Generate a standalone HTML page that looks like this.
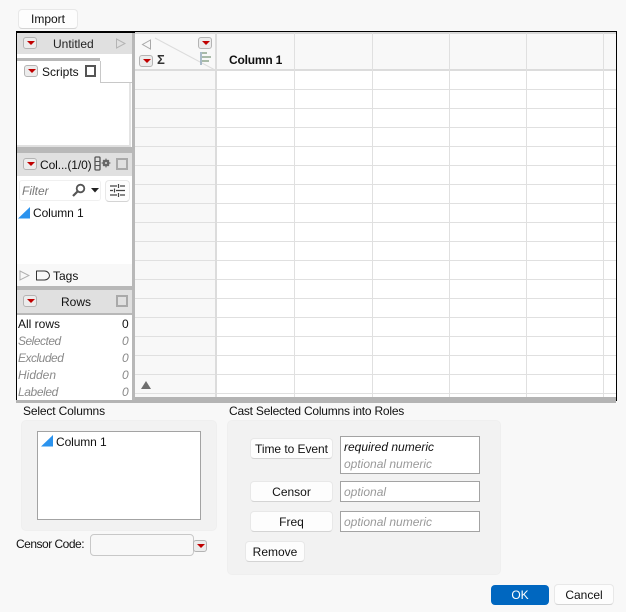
<!DOCTYPE html>
<html><head><meta charset="utf-8">
<style>
html,body{margin:0;padding:0;width:626px;height:612px;overflow:hidden;background:#f8f8f8;font-family:"Liberation Sans",sans-serif;font-size:12px;color:#111}
.a{position:absolute;box-sizing:border-box}
.t{position:absolute;white-space:nowrap;line-height:14px}
.btn{position:absolute;box-sizing:border-box;background:#fdfdfd;border:1px solid #e8e8e8;border-bottom-color:#d4d4d4;border-radius:4px;text-align:center;color:#111;white-space:nowrap}
.rb{position:absolute;box-sizing:border-box;width:14px;height:12px;background:#ececec;border:1px solid #b4b4b4;border-radius:3px}
.rb:after{content:"";position:absolute;left:2.500px;top:3px;width:0;height:0;border-left:4px solid transparent;border-right:4px solid transparent;border-top:4px solid #c00000}
.hl{position:absolute;left:135px;width:481px;height:1px;background:#e0e0e0}
.vl{position:absolute;top:33px;height:364px;width:1px;background:#e0e0e0}
.g{color:#8a8a8a;font-style:italic}
.cb{position:absolute;box-sizing:border-box;width:12px;height:12px;border:2px solid #a9a9a9}
.field{position:absolute;box-sizing:border-box;background:#fff;border:1px solid #a3a3a3}
</style></head><body>

<div class="btn" style="left:18px;top:9px;width:60px;height:20px;line-height:18px">Import</div>

<!-- frame -->
<div class="a" style="left:16px;top:31px;width:601px;height:2px;background:#000"></div>
<div class="a" style="left:16px;top:31px;width:1px;height:370px;background:#000"></div>
<div class="a" style="left:616px;top:31px;width:1px;height:370px;background:#000"></div>

<!-- grid -->
<div class="a" style="left:135px;top:33px;width:481px;height:364px;background:#fff"></div>
<div class="a" style="left:135px;top:33px;width:481px;height:37px;background:#f8f8f8"></div>
<div class="a" style="left:135px;top:33px;width:80px;height:364px;background:#f8f8f8"></div>
<div class="a" style="left:135px;top:32px;width:481px;height:2px;background:#d8d8d8"></div>
<div class="a" style="left:135px;top:69px;width:481px;height:2px;background:#dcdcdc"></div>
<div class="hl" style="top:89px"></div><div class="hl" style="top:108px"></div><div class="hl" style="top:127px"></div><div class="hl" style="top:146px"></div><div class="hl" style="top:165px"></div><div class="hl" style="top:184px"></div><div class="hl" style="top:203px"></div><div class="hl" style="top:222px"></div><div class="hl" style="top:241px"></div><div class="hl" style="top:260px"></div><div class="hl" style="top:279px"></div><div class="hl" style="top:298px"></div><div class="hl" style="top:317px"></div><div class="hl" style="top:336px"></div><div class="hl" style="top:355px"></div><div class="hl" style="top:374px"></div><div class="hl" style="top:393px"></div>
<div class="vl" style="left:215px;width:2px;background:#dcdcdc"></div>
<div class="vl" style="left:294px"></div><div class="vl" style="left:372px"></div><div class="vl" style="left:449px"></div><div class="vl" style="left:526px"></div><div class="vl" style="left:603px"></div>
<div class="t" style="left:229px;top:53px;font-weight:bold;letter-spacing:-.2px">Column 1</div>

<!-- corner -->
<svg class="a" style="left:135px;top:33px" width="80" height="37">
<path d="M20 5L80 37" stroke="#dcdcdc" stroke-width="1" fill="none"/>
<path d="M15.500 7L7.500 11.500L15.500 16Z" fill="none" stroke="#a8a8a8"/>
<path d="M66 19v13" stroke="#8fa6b8" stroke-width="1.500"/>
<path d="M67 20h5M67 24h9M67 28h7" stroke="#8ea68e" stroke-width="1.500"/>
</svg>
<div class="t" style="left:157px;top:53px;font-weight:bold;font-size:13px;color:#333">Σ</div>
<div class="rb" style="left:198px;top:37px"></div>
<div class="rb" style="left:139px;top:55px"></div>
<svg class="a" style="left:141px;top:381px" width="10" height="8"><path d="M0 8L5 0L10 8Z" fill="#6f6f6f"/></svg>

<!-- left panel -->
<div class="a" style="left:17px;top:33px;width:115px;height:367px;background:#fff"></div>
<div class="a" style="left:132px;top:33px;width:3px;height:367px;background:#b8b8b8"></div>
<div class="a" style="left:135px;top:397px;width:481px;height:6px;background:#b4b4b4"></div>
<div class="a" style="left:16px;top:400px;width:119px;height:3px;background:#b4b4b4"></div>

<div class="a" style="left:17px;top:33px;width:115px;height:21px;background:#e0e0e0"></div>
<div class="rb" style="left:23px;top:37px"></div>
<div class="t" style="left:53px;top:37px;color:#222">Untitled</div>
<svg class="a" style="left:115px;top:38px" width="11" height="11"><path d="M1.500 1L10 5.500L1.500 10Z" fill="none" stroke="#b4b4b4"/></svg>

<div class="a" style="left:17px;top:58px;width:83px;height:3px;background:#b8b8b8"></div>
<div class="a" style="left:17px;top:61px;width:83px;height:22px;background:#fff"></div>
<div class="a" style="left:100px;top:61px;width:1px;height:22px;background:#c8c8c8"></div>
<div class="a" style="left:100px;top:82px;width:32px;height:1px;background:#c8c8c8"></div>
<div class="rb" style="left:24px;top:65px"></div>
<div class="t" style="left:42px;top:65px">Scripts</div>
<div class="a" style="left:85px;top:65px;width:11px;height:12px;border:2px solid #555"></div>
<div class="a" style="left:17px;top:83px;width:114px;height:64px;background:#fff;border-right:2px solid #e4e4e4;border-bottom:2px solid #e0e0e0"></div>
<div class="a" style="left:17px;top:147px;width:115px;height:6px;background:#b8b8b8"></div>

<div class="a" style="left:17px;top:153px;width:115px;height:23px;background:#e0e0e0"></div>
<div class="rb" style="left:23px;top:158px"></div>
<div class="t" style="left:40px;top:158px;letter-spacing:-.1px">Col...(1/0)</div>
<svg class="a" style="left:94px;top:156px" width="18" height="16"><rect x="1" y="1" width="5" height="13" rx="1" fill="none" stroke="#555" stroke-width="1.300"/><path d="M1 5.500h5M1 9.500h5" stroke="#555"/><circle cx="12" cy="7" r="2.500" fill="none" stroke="#666" stroke-width="2"/><path d="M12 2.500v9M7.500 7h9M9 4l6 6M15 4l-6 6" stroke="#666" stroke-width="1"/><circle cx="12" cy="7" r="1" fill="#ddd"/></svg>
<div class="cb" style="left:116px;top:158px"></div>

<div class="a" style="left:19px;top:180px;width:82px;height:21px;background:#fff;border:1px solid #f0f0f0;border-radius:3px"></div>
<div class="t g" style="left:22px;top:184px;color:#777">Filter</div>
<svg class="a" style="left:71px;top:183px" width="16" height="15"><circle cx="9.500" cy="5.500" r="3.800" fill="none" stroke="#555" stroke-width="1.800"/><path d="M6.500 8.500L2 13" stroke="#555" stroke-width="2.200"/></svg>
<svg class="a" style="left:91px;top:188px" width="9" height="5"><path d="M0 0H8L4 4.500Z" fill="#222"/></svg>
<div class="btn" style="left:105px;top:180px;width:25px;height:22px"></div>
<svg class="a" style="left:110px;top:183px" width="15" height="15"><path d="M0 3h7M10 3h5M0 7.500h3M6 7.500h9M0 12h7M10 12h5M8.500 1v4M4.500 5.500v4M8.500 10v4" stroke="#444" stroke-width="1.200" fill="none"/></svg>

<svg class="a" style="left:18px;top:207px" width="13" height="12"><path d="M0 11.500L12 0V11.500Z" fill="#2b93ee"/></svg>
<div class="t" style="left:33px;top:206px;letter-spacing:-.1px">Column 1</div>

<div class="a" style="left:17px;top:264px;width:115px;height:22px;background:#f8f8f8"></div>
<svg class="a" style="left:19px;top:270px" width="11" height="11"><path d="M1 1L10 5.500L1 10Z" fill="none" stroke="#b0b0b0"/></svg>
<svg class="a" style="left:35px;top:270px" width="16" height="11"><path d="M1.500 1H9.500C12.500 1 14.500 3.500 14.500 5.500C14.500 7.500 12.500 10 9.500 10H1.500Z" fill="none" stroke="#333" stroke-linejoin="round"/></svg>
<div class="t" style="left:53px;top:269px">Tags</div>

<div class="a" style="left:17px;top:286px;width:115px;height:4px;background:#b8b8b8"></div>
<div class="a" style="left:17px;top:290px;width:115px;height:23px;background:#e0e0e0"></div>
<div class="a" style="left:17px;top:313px;width:115px;height:2px;background:#b8b8b8"></div>
<div class="rb" style="left:23px;top:295px"></div>
<div class="t" style="left:61px;top:295px">Rows</div>
<div class="cb" style="left:116px;top:295px"></div>

<div class="t" style="left:18px;top:317px">All rows</div><div class="t" style="left:122px;top:317px">0</div>
<div class="t g" style="left:18px;top:334px;letter-spacing:-.5px">Selected</div><div class="t g" style="left:122px;top:334px">0</div>
<div class="t g" style="left:18px;top:351px;letter-spacing:-.5px">Excluded</div><div class="t g" style="left:122px;top:351px">0</div>
<div class="t g" style="left:18px;top:368px">Hidden</div><div class="t g" style="left:122px;top:368px">0</div>
<div class="t g" style="left:18px;top:385px;letter-spacing:-.4px">Labeled</div><div class="t g" style="left:122px;top:385px">0</div>

<!-- select columns -->
<div class="t" style="left:23px;top:404px;letter-spacing:-.15px">Select Columns</div>
<div class="a" style="left:21px;top:420px;width:196px;height:111px;background:#f2f2f2;border:1px solid #efefef;border-radius:5px"></div>
<div class="field" style="left:37px;top:431px;width:164px;height:89px"></div>
<svg class="a" style="left:41px;top:435px" width="13" height="12"><path d="M0 11.500L12 0V11.500Z" fill="#2b93ee"/></svg>
<div class="t" style="left:56px;top:435px;letter-spacing:-.1px">Column 1</div>

<div class="t" style="left:16px;top:537px;letter-spacing:-.5px">Censor Code:</div>
<div class="a" style="left:90px;top:534px;width:104px;height:22px;background:#f8f8f8;border:1px solid #c8c8c8;border-radius:4px"></div>
<div class="rb" style="left:193px;top:540px;width:14px;height:12px"></div>

<!-- cast -->
<div class="t" style="left:229px;top:404px;letter-spacing:-.22px">Cast Selected Columns into Roles</div>
<div class="a" style="left:227px;top:420px;width:274px;height:155px;background:#f2f2f2;border:1px solid #efefef;border-radius:5px"></div>
<div class="btn" style="left:250px;top:438px;width:83px;height:21px;line-height:20px;letter-spacing:-.05px">Time to Event</div>
<div class="field" style="left:340px;top:436px;width:140px;height:38px"></div>
<div class="t" style="left:344px;top:440px;font-style:italic">required numeric</div>
<div class="t g" style="left:344px;top:457px;color:#999">optional numeric</div>
<div class="btn" style="left:250px;top:481px;width:83px;height:21px;line-height:20px">Censor</div>
<div class="field" style="left:340px;top:481px;width:140px;height:21px"></div>
<div class="t g" style="left:344px;top:485px;color:#999">optional</div>
<div class="btn" style="left:250px;top:511px;width:83px;height:21px;line-height:20px">Freq</div>
<div class="field" style="left:340px;top:511px;width:140px;height:21px"></div>
<div class="t g" style="left:344px;top:515px;color:#999">optional numeric</div>
<div class="btn" style="left:245px;top:541px;width:60px;height:21px;line-height:20px">Remove</div>

<div class="a" style="left:491px;top:585px;width:58px;height:20px;background:#0067c0;border-radius:4px;color:#fff;text-align:center;line-height:20px">OK</div>
<div class="btn" style="left:554px;top:584px;width:60px;height:21px;line-height:20px">Cancel</div>
</body></html>
